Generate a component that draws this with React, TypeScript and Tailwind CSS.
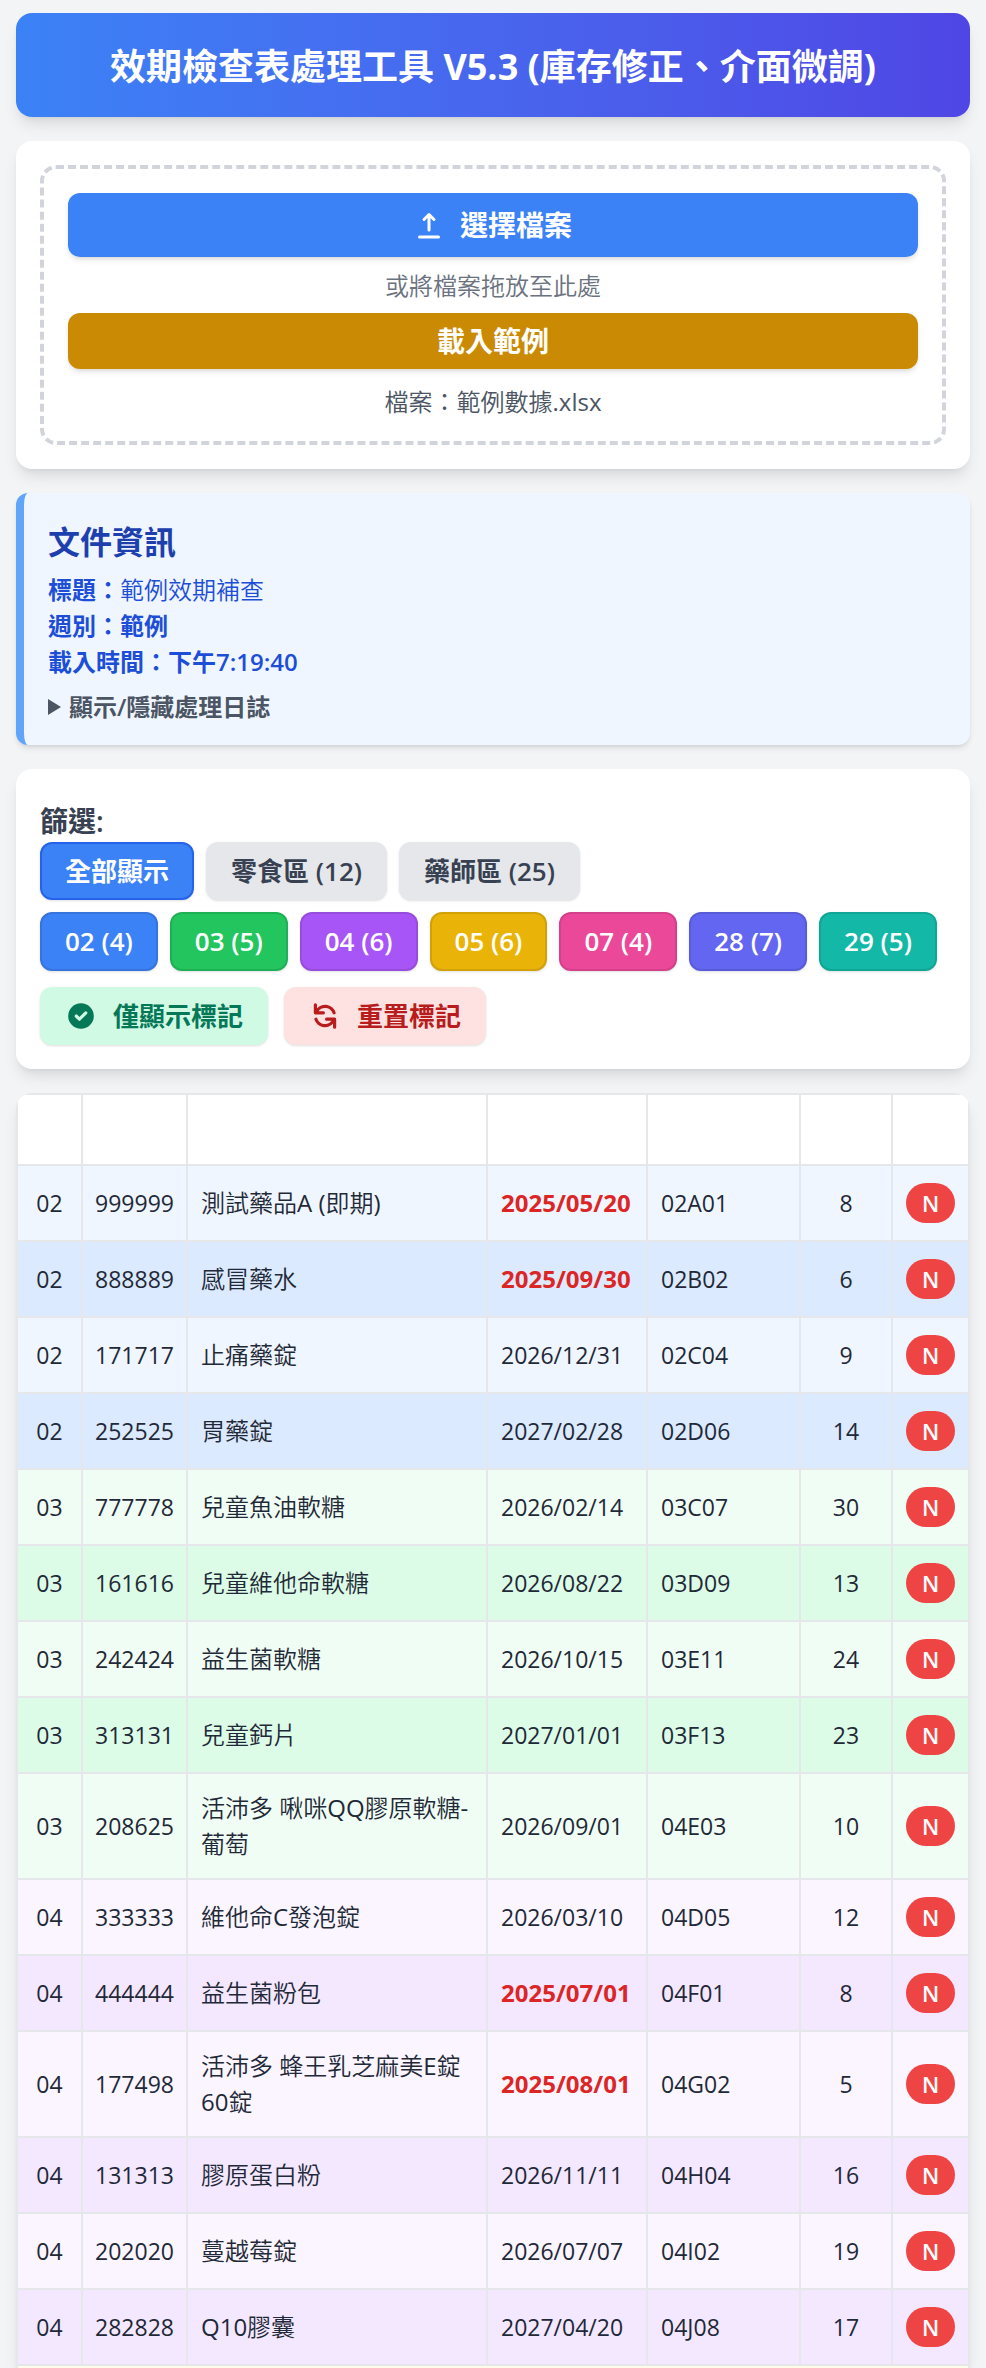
import React from "react";

type Row = [string, string, string, string, string, number];

const rows: Row[] = [
  ["02", "999999", "測試藥品A (即期)", "2025/05/20", "02A01", 8],
  ["02", "888889", "感冒藥水", "2025/09/30", "02B02", 6],
  ["02", "171717", "止痛藥錠", "2026/12/31", "02C04", 9],
  ["02", "252525", "胃藥錠", "2027/02/28", "02D06", 14],
  ["03", "777778", "兒童魚油軟糖", "2026/02/14", "03C07", 30],
  ["03", "161616", "兒童維他命軟糖", "2026/08/22", "03D09", 13],
  ["03", "242424", "益生菌軟糖", "2026/10/15", "03E11", 24],
  ["03", "313131", "兒童鈣片", "2027/01/01", "03F13", 23],
  ["03", "208625", "活沛多 啾咪QQ膠原軟糖-葡萄", "2026/09/01", "04E03", 10],
  ["04", "333333", "維他命C發泡錠", "2026/03/10", "04D05", 12],
  ["04", "444444", "益生菌粉包", "2025/07/01", "04F01", 8],
  ["04", "177498", "活沛多 蜂王乳芝麻美E錠60錠", "2025/08/01", "04G02", 5],
  ["04", "131313", "膠原蛋白粉", "2026/11/11", "04H04", 16],
  ["04", "202020", "蔓越莓錠", "2026/07/07", "04I02", 19],
  ["04", "282828", "Q10膠囊", "2027/04/20", "04J08", 17],
];

const stripes: Record<string, [string, string]> = {
  "02": ["bg-[#eff6ff]", "bg-[#dbeafe]"],
  "03": ["bg-[#f0fdf4]", "bg-[#dcfce7]"],
  "04": ["bg-[#faf5ff]", "bg-[#f3e8ff]"],
};

const categories = [
  { label: "02 (4)", bg: "bg-[#3b82f6]" },
  { label: "03 (5)", bg: "bg-[#22c55e]" },
  { label: "04 (6)", bg: "bg-[#a855f7]" },
  { label: "05 (6)", bg: "bg-[#eab308]" },
  { label: "07 (4)", bg: "bg-[#ec4899]" },
  { label: "28 (7)", bg: "bg-[#6366f1]" },
  { label: "29 (5)", bg: "bg-[#14b8a6]" },
];

const thin = "font-['Open_Sans','Noto_Sans_CJK_TC_DemiLight','Noto_Sans_CJK_TC',sans-serif]";
const cell = "border-2 border-[#e5e7eb] px-[13px] py-4";
const pill = "rounded-xl border-2 px-[23px] text-[26px] shadow-sm";

function UploadIcon() {
  return (
    <svg viewBox="0 0 30 30" className="h-[30px] w-[30px]" fill="none" stroke="currentColor" strokeWidth="3" strokeLinecap="round" strokeLinejoin="round" aria-hidden="true">
      <path d="M15 20V5M10 9.5L15 4.5L20 9.5M5.5 27H24.5" />
    </svg>
  );
}

function CheckIcon() {
  return (
    <svg viewBox="0 0 20 20" className="h-8 w-8" fill="currentColor" aria-hidden="true">
      <path fillRule="evenodd" clipRule="evenodd" d="M10 18a8 8 0 100-16 8 8 0 000 16zm3.707-9.293a1 1 0 00-1.414-1.414L9 10.586 7.707 9.293a1 1 0 00-1.414 1.414l2 2a1 1 0 001.414 0l4-4z" />
    </svg>
  );
}

function ResetIcon() {
  return (
    <svg viewBox="0 0 20 20" className="h-8 w-8" fill="currentColor" aria-hidden="true">
      <path fillRule="evenodd" clipRule="evenodd" d="M4 2a1 1 0 011 1v2.101a7.002 7.002 0 0111.601 2.566 1 1 0 11-1.885.666A5.002 5.002 0 005.999 7H9a1 1 0 010 2H4a1 1 0 01-1-1V3a1 1 0 011-1zm.008 9.057a1 1 0 011.276.61A5.002 5.002 0 0014.001 13H11a1 1 0 110-2h5a1 1 0 011 1v5a1 1 0 11-2 0v-2.101a7.002 7.002 0 01-11.601-2.566 1 1 0 01.61-1.276z" />
    </svg>
  );
}

export default function App() {
  return (
    <div className="flex min-h-screen flex-col gap-6 bg-[#f3f4f6] px-4 pt-[13px] font-['Open_Sans','Noto_Sans_CJK_TC',sans-serif] text-2xl leading-9 text-[#1f2937]">
      <header className="rounded-2xl bg-linear-to-r from-[#3b82f6] to-[#4f46e5] pt-[26px] pb-[22px] text-center text-white shadow-lg">
        <h1 className="text-4xl leading-[56px] font-bold">效期檢查表處理工具 V5.3 (庫存修正、介面微調)</h1>
      </header>

      <section className="rounded-2xl bg-white p-6 shadow-lg">
        <div className="flex flex-col rounded-2xl border-4 border-dashed border-[#d1d5db] px-6 pt-6 pb-[21px] text-center">
          <button type="button" className="flex h-16 items-center justify-center gap-4 rounded-xl bg-[#3b82f6] text-[28px] font-bold text-white shadow-md">
            <UploadIcon />
            選擇檔案
          </button>
          <p className={`${thin} pt-[11px] pb-[9px] text-[#6b7280]`}>或將檔案拖放至此處</p>
          <button type="button" className="h-14 rounded-xl bg-[#ca8a04] text-[28px] font-bold text-white shadow-md">載入範例</button>
          <p className={`${thin} pt-[15px] text-[#4b5563]`}>檔案：範例數據.xlsx</p>
        </div>
      </section>

      <section className="rounded-xl border-l-8 border-[#60a5fa] bg-[#eff6ff] px-6 pt-6 pb-5 text-[#1d4ed8] shadow-md">
        <h2 className="pb-[5px] text-[32px] leading-[50px] font-semibold text-[#1e40af]">文件資訊</h2>
        <p className={thin}><strong className="font-['Open_Sans','Noto_Sans_CJK_TC',sans-serif] font-semibold">標題：</strong>範例效期補查</p>
        <p className="font-semibold">週別：範例</p>
        <p className="font-semibold">載入時間：下午7:19:40</p>
        <details className="group pt-[9px] font-semibold text-[#4b5563]">
          <summary className="flex list-none items-center gap-2">
            <svg viewBox="0 0 13 16" className="h-4 w-[13px] group-open:rotate-90" fill="currentColor" aria-hidden="true">
              <path d="M0 0L13 8L0 16Z" />
            </svg>
            顯示/隱藏處理日誌
          </summary>
        </details>
      </section>

      <section className="rounded-2xl bg-white p-6 shadow-lg">
        <h2 className="pt-2 text-[28px] leading-[41px] font-semibold text-[#374151]">篩選:</h2>
        <div className="flex flex-wrap gap-3 leading-[54px]">
          <button type="button" className={`${pill} border-[#2563eb] bg-[#3b82f6] font-bold text-white`}>全部顯示</button>
          <button type="button" className={`${pill} border-[#e5e7eb] bg-[#e5e7eb] font-semibold text-[#374151]`}>零食區 (12)</button>
          <button type="button" className={`${pill} border-[#e5e7eb] bg-[#e5e7eb] font-semibold text-[#374151]`}>藥師區 (25)</button>
        </div>
        <div className="flex flex-wrap gap-3 pt-3 leading-[55px]">
          {categories.map((c) => (
            <button key={c.label} type="button" className={`${pill} ${c.bg} border-black/10 font-semibold text-white`}>{c.label}</button>
          ))}
        </div>
        <div className="flex flex-wrap gap-4 pt-4 leading-[54px]">
          <button type="button" className={`${pill} flex items-center gap-4 border-[#d1fae5] bg-[#d1fae5] font-semibold text-[#047857]`}>
            <CheckIcon />
            僅顯示標記
          </button>
          <button type="button" className={`${pill} flex items-center gap-4 border-[#fee2e2] bg-[#fee2e2] font-semibold text-[#b91c1c]`}>
            <ResetIcon />
            重置標記
          </button>
        </div>
      </section>

      <div className="overflow-hidden rounded-t-2xl bg-white shadow-lg">
        <table className="w-full table-fixed border-collapse">
          <colgroup>
            <col className="w-[65px]" />
            <col className="w-[105px]" />
            <col />
            <col className="w-[160px]" />
            <col className="w-[153px]" />
            <col className="w-[92px]" />
            <col className="w-[77px]" />
          </colgroup>
          <thead>
            <tr className="h-[71px]">
              {[0, 1, 2, 3, 4, 5, 6].map((i) => (
                <th key={i} className="border-2 border-[#e5e7eb]" />
              ))}
            </tr>
          </thead>
          <tbody>
            {rows.map(([zone, code, name, date, slot, qty], i) => {
              const first = rows.findIndex((r) => r[0] === zone);
              return (
                <tr key={code} className={stripes[zone][(i - first) % 2]}>
                  <td className={`${cell} text-center text-[23px]`}>{zone}</td>
                  <td className="border-2 border-[#e5e7eb] text-center text-[23px]">{code}</td>
                  <td className={`${cell} ${thin}`}>{name}</td>
                  <td className={date < "2025/12/31" ? `${cell} whitespace-nowrap font-bold text-[#dc2626]` : `${cell} whitespace-nowrap text-[23px]`}>{date}</td>
                  <td className={`${cell} text-[23px]`}>{slot}</td>
                  <td className={`${cell} text-center text-[23px]`}>{qty}</td>
                  <td className={`${cell} text-center`}>
                    <div className="flex h-[42px] items-center justify-center">
                      <button type="button" className="h-10 w-[49px] rounded-[20px] bg-[#ef4444] text-[22px] font-semibold text-white">N</button>
                    </div>
                  </td>
                </tr>
              );
            })}
            <tr className="bg-[#fefce8]">
              <td colSpan={7} className="h-1 border-x-2 border-[#e5e7eb]" />
            </tr>
          </tbody>
        </table>
      </div>
    </div>
  );
}
